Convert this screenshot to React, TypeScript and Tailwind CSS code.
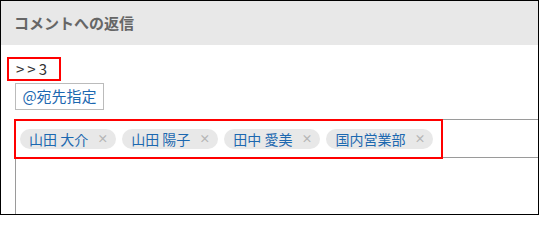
const font = { fontFamily: '"Noto Sans CJK JP", "Liberation Sans", sans-serif' };

const tags = ["山田 大介", "山田 陽子", "田中 愛美", "国内営業部"];

function Tag({ label }: { label: string }) {
  return (
    <span className="flex h-[20px] items-center rounded-full bg-[#e8e8e8] pl-[9px] pr-[8px] text-[14px] leading-none text-[#1c68b0]">
      {label}
      <span className="ml-[9px] text-[11px] font-bold text-[#b5b5b5]">×</span>
    </span>
  );
}

export default function App() {
  return (
    <div
      className="flex h-[215px] w-[539px] flex-col overflow-hidden border border-black bg-white"
      style={font}
    >
      <div className="flex h-[44px] shrink-0 items-center bg-[#e8e8e8] pl-[13px] text-[15px] font-bold text-[#666]">
        コメントへの返信
      </div>
      <div className="flex flex-1 flex-col pl-[6px] pt-[12px]">
        <div className="flex h-[24px] w-[54px] items-center border-2 border-[#ff0000] pl-[7px] text-[15px] tracking-[3px] text-[#333]">
          &gt;&gt;3
        </div>
        <div className="ml-[8px] mt-[2px] flex h-[27px] w-[89px] items-center justify-center border border-[#bbb] text-[15px] text-[#1c68b0]">
          @宛先指定
        </div>
        <div className="ml-[8px] mt-[9px] flex flex-1 flex-col border-l border-t border-[#9a9a9a]">
          <div className="relative flex h-[38px] items-center gap-[6px] border-b border-[#9a9a9a] pl-[4px]">
            {tags.map((t) => (
              <Tag key={t} label={t} />
            ))}
            <div className="pointer-events-none absolute -left-[2px] -top-[1px] h-[40px] w-[429px] border-2 border-[#ff0000]" />
          </div>
          <div className="flex-1" />
        </div>
      </div>
    </div>
  );
}
